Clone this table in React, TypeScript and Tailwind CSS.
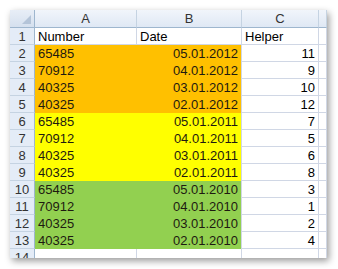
import React from "react";

type Row = { num: string; date: string; helper: string; fill: string };

const rows: Row[] = [
  { num: "65485", date: "05.01.2012", helper: "11", fill: "bg-[#ffc000]" },
  { num: "70912", date: "04.01.2012", helper: "9", fill: "bg-[#ffc000]" },
  { num: "40325", date: "03.01.2012", helper: "10", fill: "bg-[#ffc000]" },
  { num: "40325", date: "02.01.2012", helper: "12", fill: "bg-[#ffc000]" },
  { num: "65485", date: "05.01.2011", helper: "7", fill: "bg-[#ffff00]" },
  { num: "70912", date: "04.01.2011", helper: "5", fill: "bg-[#ffff00]" },
  { num: "40325", date: "03.01.2011", helper: "6", fill: "bg-[#ffff00]" },
  { num: "40325", date: "02.01.2011", helper: "8", fill: "bg-[#ffff00]" },
  { num: "65485", date: "05.01.2010", helper: "3", fill: "bg-[#92d050]" },
  { num: "70912", date: "04.01.2010", helper: "1", fill: "bg-[#92d050]" },
  { num: "40325", date: "03.01.2010", helper: "2", fill: "bg-[#92d050]" },
  { num: "40325", date: "02.01.2010", helper: "4", fill: "bg-[#92d050]" },
];

const cols = "grid grid-cols-[25px_102px_105px_77px_1fr]";
const rowHead =
  "flex items-center justify-center bg-[#e4ecf7] border-r border-b border-r-[#9eb6ce] border-b-[#c5d3e2] text-[#333]";
const colHead =
  "flex items-center justify-center bg-gradient-to-b from-[#f1f5fb] to-[#dfe8f4] border-r border-b border-r-[#c5d3e2] border-b-[#9eb6ce] text-[#333]";
const cell = "flex items-center border-r border-b border-[#d0d7e5] px-[3px]";

export default function App() {
  return (
    <div className="w-[338px] h-[269px] bg-white p-[10px]">
      <div
        className="w-[317px] h-[248px] overflow-hidden bg-white shadow-[2px_3px_7px_rgba(0,0,0,0.4)] text-[13px] leading-none"
        style={{ fontFamily: '"Liberation Sans", Arial, sans-serif' }}
      >
        {/* column letters */}
        <div className={`${cols} h-[18px]`}>
          <div className="relative bg-gradient-to-b from-[#e8eef7] to-[#d5e0ee] border-r border-b border-[#9eb6ce]">
            {/* select-all triangle */}
            <svg className="absolute right-[3px] bottom-[3px]" width="9" height="9" viewBox="0 0 9 9">
              <polygon points="9,0 9,9 0,9" fill="#b4c4d8" />
            </svg>
          </div>
          <div className={colHead}>A</div>
          <div className={colHead}>B</div>
          <div className={colHead}>C</div>
          <div className={colHead} />
        </div>

        {/* titles */}
        <div className={`${cols} h-[17px]`}>
          <div className={rowHead}>1</div>
          <div className={cell}>Number</div>
          <div className={cell}>Date</div>
          <div className={cell}>Helper</div>
          <div className={cell} />
        </div>

        {rows.map((r, i) => (
          <div key={i} className={`${cols} h-[17px]`}>
            <div className={rowHead}>{i + 2}</div>
            <div className={`flex items-center px-[3px] text-[#1e1a10] ${r.fill}`}>{r.num}</div>
            <div className={`flex items-center justify-end pr-[3px] border-r border-[#d0d7e5] text-[#1e1a10] ${r.fill}`}>
              {r.date}
            </div>
            <div className={`${cell} justify-end`}>{r.helper}</div>
            <div className={cell} />
          </div>
        ))}

        <div className={`${cols} h-[17px]`}>
          <div className={rowHead}>14</div>
          <div className={cell} />
          <div className={cell} />
          <div className={cell} />
          <div className={cell} />
        </div>
      </div>
    </div>
  );
}
